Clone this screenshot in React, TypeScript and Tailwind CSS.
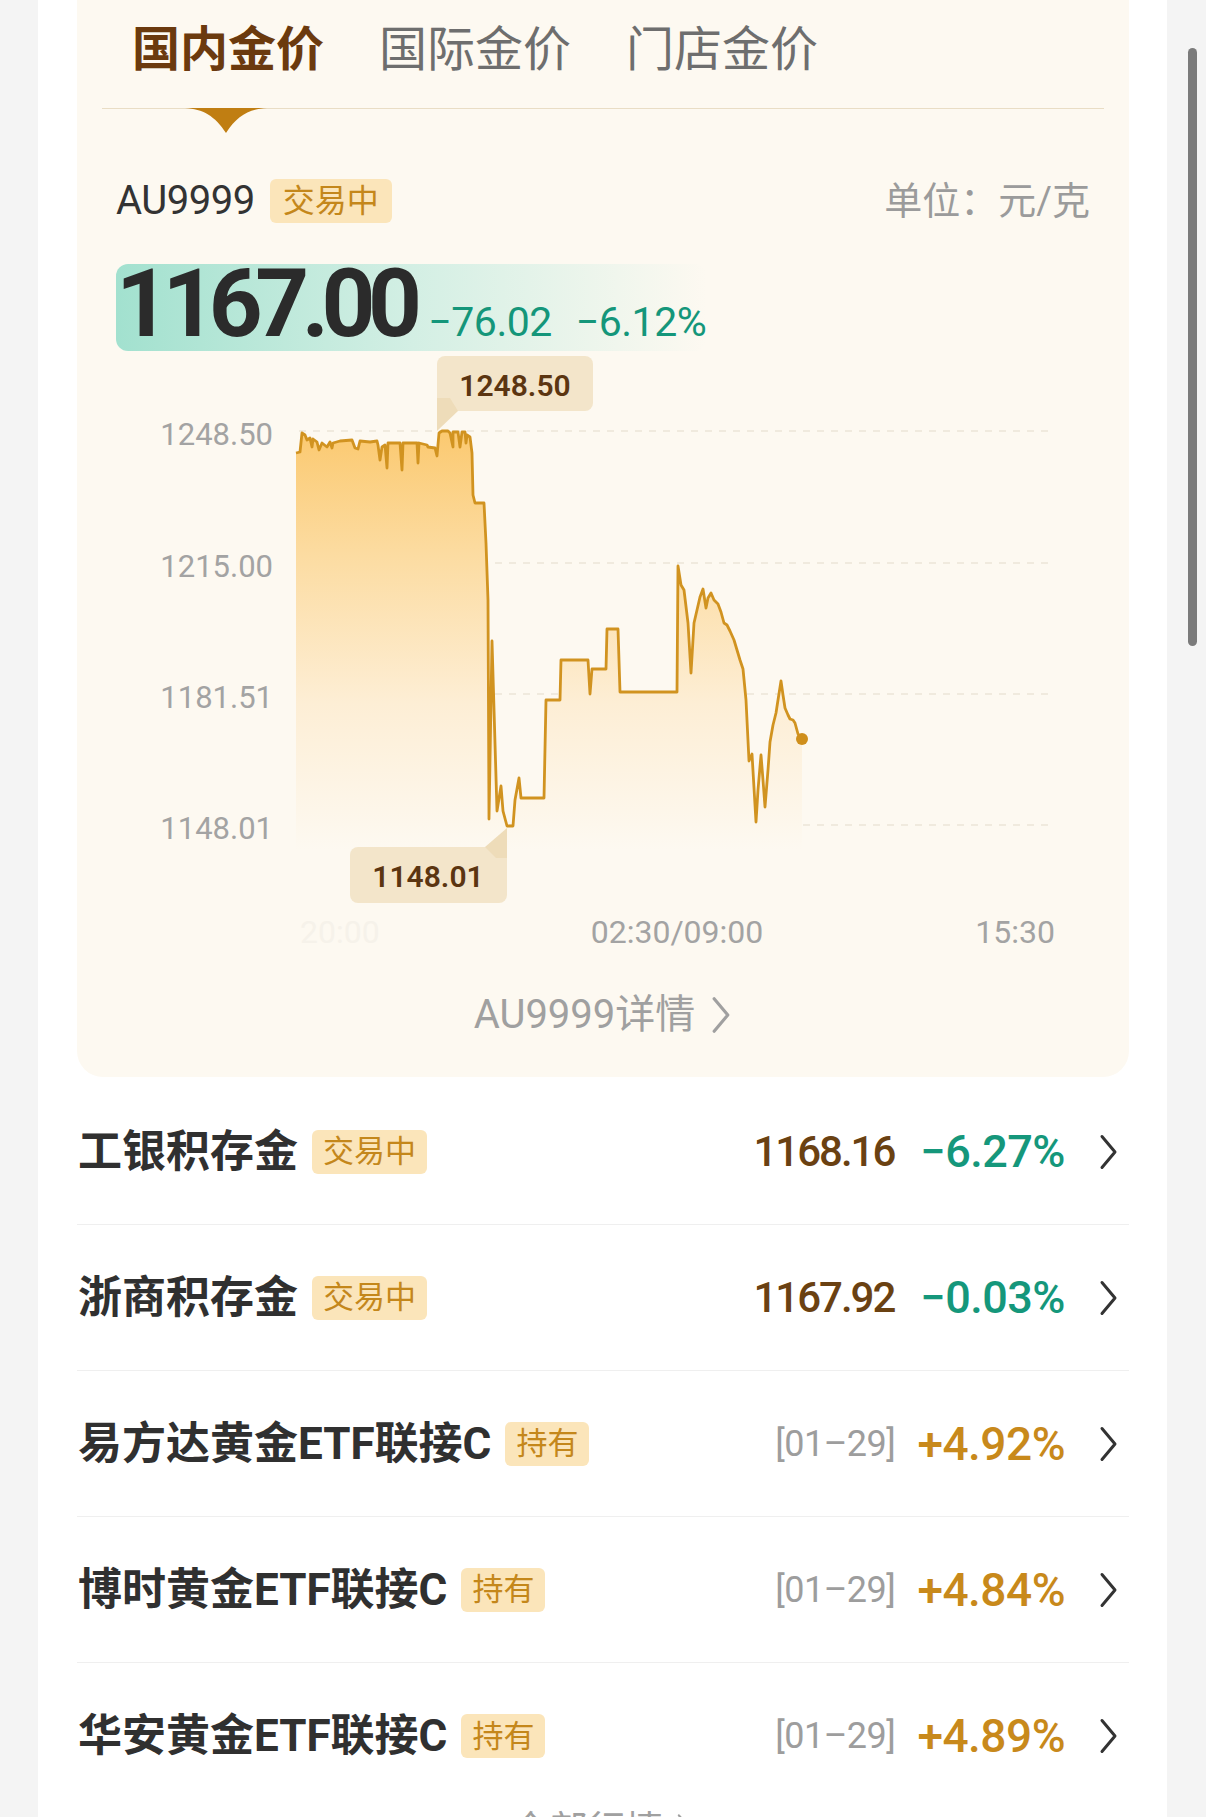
import { ReactNode } from "react";

type Row = {
  name: string;
  tag: string;
  kind: "price" | "fund";
  a: string;
  b: string;
};

const rows: Row[] = [
  { name: "工银积存金", tag: "交易中", kind: "price", a: "1168.16", b: "−6.27%" },
  { name: "浙商积存金", tag: "交易中", kind: "price", a: "1167.92", b: "−0.03%" },
  { name: "易方达黄金ETF联接C", tag: "持有", kind: "fund", a: "[01–29]", b: "+4.92%" },
  { name: "博时黄金ETF联接C", tag: "持有", kind: "fund", a: "[01–29]", b: "+4.84%" },
  { name: "华安黄金ETF联接C", tag: "持有", kind: "fund", a: "[01–29]", b: "+4.89%" },
];

// intraday AU9999 trace, in page pixels
const trace: [number, number][] = [
  [296, 453], [300, 452], [302, 433], [305, 435], [307, 440], [310, 438], [312, 447], [313, 439],
  [317, 442], [319, 450], [322, 443], [327, 447], [330, 442], [332, 448], [333, 443], [340, 441],
  [352, 440], [355, 448], [358, 449], [360, 441], [370, 442], [377, 441], [378, 445], [380, 460],
  [382, 447], [385, 445], [387, 468], [388, 443], [400, 443], [402, 470], [403, 443], [417, 443],
  [418, 463], [419, 443], [427, 445], [428, 447], [435, 448], [437, 456], [439, 433], [442, 431],
  [448, 431], [450, 433], [453, 447], [453, 432], [458, 432], [460, 447], [462, 432], [465, 432],
  [466, 443], [467, 435], [470, 437], [472, 453], [473, 495], [475, 503], [484, 503], [486, 543],
  [488, 600], [489, 819], [492, 641], [497, 811], [501, 786], [503, 811], [507, 826], [513, 826],
  [515, 800], [519, 778], [521, 798], [544, 798], [546, 700], [560, 700], [561, 660], [588, 660],
  [590, 694], [592, 669], [606, 669], [607, 629], [618, 629], [620, 692], [677, 692], [678, 566],
  [681, 585], [684, 590], [688, 623], [691, 673], [694, 623], [697, 610], [700, 597], [703, 589],
  [706, 608], [708, 598], [711, 593], [714, 600], [718, 604], [721, 612], [724, 623], [727, 625],
  [730, 631], [734, 640], [737, 650], [740, 660], [743, 669], [746, 700], [749, 761], [752, 754],
  [756, 822], [758, 790], [761, 755], [763, 780], [765, 807], [768, 770], [770, 742], [773, 725],
  [776, 713], [778, 700], [781, 681], [783, 695], [785, 708], [788, 715], [790, 719], [793, 720],
  [795, 723], [798, 734], [802, 739],
];

const linePath = trace.map(([x, y], i) => `${i ? "L" : "M"}${x} ${y}`).join(" ");
const areaPath = `${linePath} L802 900 L296 900 Z`;

const grid = [
  { y: 431, label: "1248.50" },
  { y: 563, label: "1215.00" },
  { y: 694, label: "1181.51" },
  { y: 825, label: "1148.01" },
];

function Chevron({ className, w = 3 }: { className?: string; w?: number }) {
  return (
    <svg width="20" height="36" viewBox="0 0 20 36" fill="none" className={className}>
      <path
        d="M3 2.5 16 18 3 33.5"
        stroke="currentColor"
        strokeWidth={w}
        strokeLinecap="round"
        strokeLinejoin="round"
      />
    </svg>
  );
}

function Tag({ children, className = "" }: { children: ReactNode; className?: string }) {
  return (
    <span
      className={`flex h-[44px] items-center rounded-[6px] bg-[#fbe5ba] px-[11px] text-[31px] leading-none text-[#c4871b] ${className}`}
    >
      {children}
    </span>
  );
}

function Chart() {
  return (
    <svg
      width="1052"
      height="594"
      viewBox="77 356 1052 594"
      className="mt-[5px] block"
      fontFamily="Roboto, sans-serif"
    >
      <defs>
        <linearGradient id="goldFill" gradientUnits="userSpaceOnUse" x1="0" y1="431" x2="0" y2="850">
          <stop offset="0" stopColor="#fbc970" />
          <stop offset="0.3" stopColor="#fcdca2" />
          <stop offset="0.65" stopColor="#fdeed5" />
          <stop offset="1" stopColor="#fdf9f1" />
        </linearGradient>
      </defs>

      {grid.map((g) => (
        <g key={g.label}>
          <line x1="299" x2="1048" y1={g.y} y2={g.y} stroke="#ece5d7" strokeWidth="1.5" strokeDasharray="7 7" />
          <text x="273" y={g.y + 14} textAnchor="end" fontSize="31" fill="#a3a3a3">
            {g.label}
          </text>
        </g>
      ))}

      <path d={areaPath} fill="url(#goldFill)" />
      <path d={linePath} fill="none" stroke="#d19320" strokeWidth="2.8" strokeLinejoin="round" />
      <circle cx="802" cy="739" r="6" fill="#cf8f1c" />

      {/* high marker */}
      <rect x="437" y="356" width="156" height="55" rx="8" fill="#f3e5ca" />
      <polygon points="437,398 437,431 458,411 450,398" fill="#eedcb9" />
      <text x="515" y="396" textAnchor="middle" fontSize="30" fontWeight="600" fill="#5b3511">
        1248.50
      </text>

      {/* low marker */}
      <rect x="350" y="847" width="157" height="56" rx="8" fill="#f3e5ca" />
      <polygon points="485,847 507,828 507,858 496,858" fill="#eedcb9" />
      <text x="428" y="887" textAnchor="middle" fontSize="30" fontWeight="600" fill="#5b3511">
        1148.01
      </text>

      <text x="300" y="943" fontSize="32" fill="#f6f2ea">
        20:00
      </text>
      <text x="677" y="943" textAnchor="middle" fontSize="32" fill="#a3a3a3">
        02:30/09:00
      </text>
      <text x="1055" y="943" textAnchor="end" fontSize="32" fill="#a3a3a3">
        15:30
      </text>
    </svg>
  );
}

function GoldCard() {
  return (
    <div className="rounded-b-[26px] bg-[#fdf9f1]">
      <div className="relative px-[25px]">
        <div className="flex h-[108px] gap-[55px] pl-[30px] pt-[26px] text-[48px] leading-none">
          <span className="font-bold text-[#6b3a0e]">国内金价</span>
          <span className="text-[#6e6e6e]">国际金价</span>
          <span className="text-[#6e6e6e]">门店金价</span>
        </div>
        <div className="h-px bg-[#e9ddc5]" />
        <svg className="absolute left-[108px] top-[108px]" width="82" height="26" viewBox="0 0 82 26">
          <path d="M0 0H82C64 1 52 8 41 25 30 8 18 1 0 0Z" fill="#c07e12" />
        </svg>
      </div>

      <div className="mx-[39px] mt-[69px] flex h-[46px] items-center justify-between">
        <div className="flex items-center">
          <span className="text-[40px] leading-none tracking-[-0.5px] text-[#333]">AU9999</span>
          <Tag className="ml-[15px] px-[13px] text-[32px]">交易中</Tag>
        </div>
        <span className="text-[38px] leading-none text-[#9b9b9b]">单位：元/克</span>
      </div>

      <div className="ml-[39px] mt-[40px] flex h-[87px] w-[591px] items-end rounded-[12px] bg-gradient-to-r from-[#a2e1cf] via-[#d3efe4] to-[#fdf9f1]/0">
        <div className="flex items-baseline">
          <span className="text-[94px] font-bold leading-none tracking-[-7.5px] text-[#2b2b2b]">1167.00</span>
          <span className="ml-[14px] text-[41px] leading-none tracking-[-0.5px] text-[#14967a]">−76.02</span>
          <span className="ml-[24px] text-[41px] leading-none tracking-[-0.5px] text-[#14967a]">−6.12%</span>
        </div>
      </div>

      <Chart />

      <div className="mt-[45px] flex items-center justify-center pb-[42px] text-[#a0a0a0]">
        <span className="text-[40px] leading-none">AU9999详情</span>
        <Chevron className="ml-[16px] h-[38px] w-[21px]" w={3} />
      </div>
    </div>
  );
}

function ListRow({ row, last }: { row: Row; last: boolean }) {
  return (
    <div
      className={`flex h-[146px] items-center justify-between pl-px pr-[10px] ${
        last ? "" : "border-b border-[#efefef]"
      }`}
    >
      <div className="flex items-center">
        <span className="text-[44px] font-bold leading-none text-[#303030]">{row.name}</span>
        <Tag className="ml-[14px]">{row.tag}</Tag>
      </div>
      <div className="flex items-center">
        {row.kind === "price" ? (
          <>
            <span className="text-[42px] font-medium leading-none tracking-[-2px] text-[#6a4112]">{row.a}</span>
            <span className="ml-[26px] text-[45px] font-medium leading-none tracking-[-0.5px] text-[#15977b]">
              {row.b}
            </span>
          </>
        ) : (
          <>
            <span className="text-[36px] leading-none tracking-[-0.5px] text-[#9d9d9d]">{row.a}</span>
            <span className="ml-[22px] text-[46px] font-medium leading-none tracking-[-0.5px] text-[#c8891b]">
              {row.b}
            </span>
          </>
        )}
        <Chevron className="ml-[34px] text-[#333]" />
      </div>
    </div>
  );
}

export default function App() {
  return (
    <div className="flex h-[1817px] w-[1206px] overflow-hidden bg-[#f4f4f4] font-[family-name:Roboto,'Noto_Sans_CJK_SC',sans-serif]">
      <div className="w-[38px] shrink-0" />
      <div className="w-[1129px] shrink-0 bg-white pl-[39px] pr-[38px]">
        <GoldCard />
        <div className="mt-[2px]">
          {rows.map((r, i) => (
            <ListRow key={r.name} row={r} last={i === rows.length - 1} />
          ))}
        </div>
        <div className="flex items-center justify-center pt-[2px] text-[#a0a0a0]">
          <span className="text-[38px] leading-none">全部行情</span>
          <Chevron className="ml-[12px] h-[34px] w-[19px]" w={2.4} />
        </div>
      </div>
      <div className="w-[39px] shrink-0 pl-[21px] pt-[48px]">
        <div className="h-[598px] w-[9px] rounded-full bg-[#7b7b7b]" />
      </div>
    </div>
  );
}
